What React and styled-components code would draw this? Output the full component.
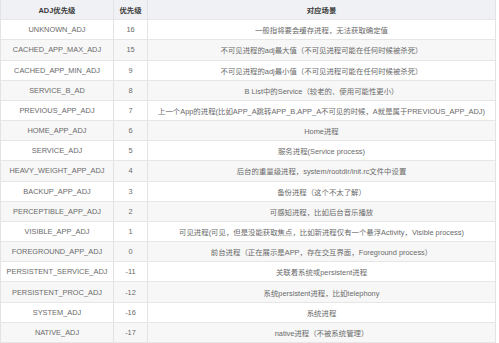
import styled, { createGlobalStyle } from "styled-components";

const GlobalStyle = createGlobalStyle`
  html, body {
    margin: 0;
    padding: 0;
    background: #fff;
  }
  body {
    font-family: "Liberation Sans", Arial, "Noto Sans CJK SC", sans-serif;
  }
`;

const Table = styled.div`
  width: 496px;
  height: 343px;
  display: grid;
  grid-template-rows: repeat(17, 1fr);
  border-left: 1px solid #e3e3e3;
  border-right: 1px solid #e3e3e3;
  box-sizing: border-box;
  overflow: hidden;
`;

const Row = styled.div`
  display: grid;
  grid-template-columns: 113px 34px 1fr;
  background: ${(props) =>
    props.head ? "#eff1f4" : props.striped ? "#f7f7f7" : "#ffffff"};
  color: ${(props) => (props.head ? "#3a3a3a" : "#6a6a6a")};
  font-weight: ${(props) => (props.head ? "bold" : "normal")};
  border-bottom: 1px solid #e6e6e6;
`;

const Cell = styled.div`
  display: flex;
  align-items: center;
  justify-content: center;
  font-size: 7.4px;
  white-space: nowrap;
  overflow: hidden;
  border-right: ${(props) => (props.last ? "none" : "1px solid #e3e3e3")};
`;

const rows = [
  ["UNKNOWN_ADJ", "16", "一般指将要会缓存进程，无法获取确定值"],
  ["CACHED_APP_MAX_ADJ", "15", "不可见进程的adj最大值（不可见进程可能在任何时候被杀死）"],
  ["CACHED_APP_MIN_ADJ", "9", "不可见进程的adj最小值（不可见进程可能在任何时候被杀死）"],
  ["SERVICE_B_AD", "8", "B List中的Service（较老的、使用可能性更小）"],
  ["PREVIOUS_APP_ADJ", "7", "上一个App的进程(比如APP_A跳转APP_B,APP_A不可见的时候，A就是属于PREVIOUS_APP_ADJ)"],
  ["HOME_APP_ADJ", "6", "Home进程"],
  ["SERVICE_ADJ", "5", "服务进程(Service process)"],
  ["HEAVY_WEIGHT_APP_ADJ", "4", "后台的重量级进程，system/rootdir/init.rc文件中设置"],
  ["BACKUP_APP_ADJ", "3", "备份进程（这个不太了解）"],
  ["PERCEPTIBLE_APP_ADJ", "2", "可感知进程，比如后台音乐播放"],
  ["VISIBLE_APP_ADJ", "1", "可见进程(可见，但是没能获取焦点，比如新进程仅有一个悬浮Activity，Visible process)"],
  ["FOREGROUND_APP_ADJ", "0", "前台进程（正在展示是APP，存在交互界面，Foreground process）"],
  ["PERSISTENT_SERVICE_ADJ", "-11", "关联着系统或persistent进程"],
  ["PERSISTENT_PROC_ADJ", "-12", "系统persistent进程，比如telephony"],
  ["SYSTEM_ADJ", "-16", "系统进程"],
  ["NATIVE_ADJ", "-17", "native进程（不被系统管理）"],
];

export default function App() {
  return (
    <>
      <GlobalStyle />
      <Table>
        <Row head>
          <Cell>ADJ优先级</Cell>
          <Cell>优先级</Cell>
          <Cell last>对应场景</Cell>
        </Row>
        {rows.map((r, i) => (
          <Row key={r[0]} striped={i % 2 === 1}>
            <Cell>{r[0]}</Cell>
            <Cell>{r[1]}</Cell>
            <Cell last>{r[2]}</Cell>
          </Row>
        ))}
      </Table>
    </>
  );
}
